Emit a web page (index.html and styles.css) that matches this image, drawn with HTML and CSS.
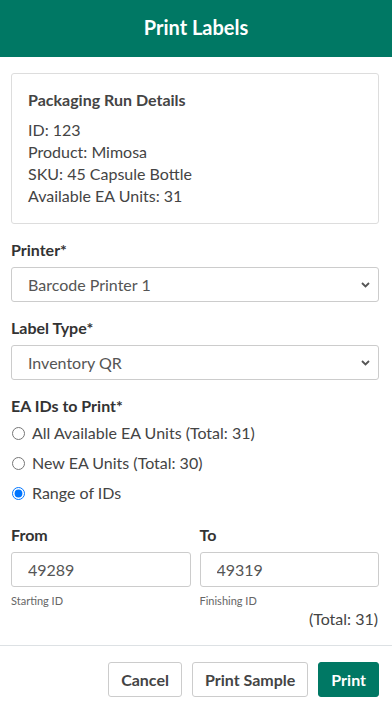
FILE: index.html
```html
<!DOCTYPE html>
<html lang="en">
  <head>
    <meta charset="UTF-8" />
    <meta name="viewport" content="width=device-width, initial-scale=1.0" />
    <title>Print Labels</title>
    <link rel="stylesheet" href="styles.css">
  </head>
  <body>
    <header class="cabecera">Print Labels</header>

    <main class="cuerpo">
      <!-- Detalles -->
      <div class="detalles">
        <h2>Packaging Run Details</h2>
        <p>ID: 123</p>
        <p>Product: Mimosa</p>
        <p>SKU: 45 Capsule Bottle</p>
        <p>Available EA Units: 31</p>
      </div>

      <label class="etiqueta" for="impresora">Printer*</label>
      <select id="impresora" class="campo selector">
        <option>Barcode Printer 1</option>
      </select>

      <label class="etiqueta" for="tipo">Label Type*</label>
      <select id="tipo" class="campo selector">
        <option>Inventory QR</option>
      </select>

      <div class="etiqueta">EA IDs to Print*</div>
      <div class="opciones">
        <label class="opcion"><input type="radio" name="ids" /> All Available EA Units (Total: 31)</label>
        <label class="opcion"><input type="radio" name="ids" /> New EA Units (Total: 30)</label>
        <label class="opcion"><input type="radio" name="ids" checked /> Range of IDs</label>
      </div>

      <div class="rango">
        <div class="grupo">
          <label class="etiqueta" for="desde">From</label>
          <input type="text" id="desde" class="campo" value="49289" />
          <small>Starting ID</small>
        </div>
        <div class="grupo">
          <label class="etiqueta" for="hasta">To</label>
          <input type="text" id="hasta" class="campo" value="49319" />
          <small>Finishing ID</small>
        </div>
      </div>
      <div class="total">(Total: 31)</div>
    </main>

    <footer class="pie">
      <button class="boton">Cancel</button>
      <button class="boton">Print Sample</button>
      <button class="boton principal">Print</button>
    </footer>
  </body>
</html>
```

FILE: styles.css
```css
* {
  box-sizing: border-box;
  margin: 0;
  padding: 0;
  font-family: 'Lato', 'Liberation Sans', sans-serif;
}

body {
  background: white;
  color: #444;
  font-size: 16px;
  line-height: 22px;
}

.cabecera {
  background-color: #007864;
  color: white;
  font-size: 20px;
  font-weight: bold;
  text-align: center;
  height: 57px;
  line-height: 55px;
}

.cuerpo {
  padding: 16px 13px 0 11px;
}

.detalles {
  border: 1px solid #ddd;
  border-radius: 3px;
  padding: 15px 16px 16px;
  margin-bottom: 15px;
}

.detalles h2 {
  font-size: 16px;
  font-weight: bold;
  margin-bottom: 8px;
}

.etiqueta {
  display: block;
  font-weight: bold;
  color: #333;
  margin-bottom: 6px;
}

.campo {
  display: block;
  width: 100%;
  height: 35px;
  border: 1px solid #ccc;
  border-radius: 3px;
  background-color: white;
  padding: 0 12px;
  font-size: 16px;
  color: #555;
  margin-bottom: 15px;
}

.selector {
  appearance: none;
  -webkit-appearance: none;
  padding: 0 30px 0 16px;
  background-image: url("data:image/svg+xml,%3Csvg xmlns='http://www.w3.org/2000/svg' width='9' height='6' viewBox='0 0 9 6'%3E%3Cpath d='M1 1l3.5 3.5L8 1' fill='none' stroke='%23555' stroke-width='1.8'/%3E%3C/svg%3E");
  background-repeat: no-repeat;
  background-position: right 8px center;
  background-size: 9px 6px;
}

input.campo {
  padding: 0 16px;
  margin-bottom: 6px;
}

.opciones {
  margin-top: -5px;
  margin-bottom: 16px;
}

.opcion {
  display: flex;
  align-items: center;
  gap: 7px;
  height: 30px;
  color: #444;
}

.opcion input {
  width: 13px;
  height: 13px;
  margin: 0 0 0 1px;
}

.rango {
  display: grid;
  grid-template-columns: 1fr 1fr;
  gap: 9px;
}

.grupo small {
  display: block;
  font-size: 11px;
  line-height: 16px;
  color: #666;
}

.total {
  text-align: right;
  line-height: 20px;
  padding-right: 1px;
}

.pie {
  margin-top: 16px;
  border-top: 1px solid #dde1e4;
  padding: 16px 13px 0 11px;
  display: flex;
  justify-content: flex-end;
  gap: 10px;
}

.boton {
  height: 35px;
  padding: 0 12px;
  border: 1px solid #ccc;
  border-radius: 3px;
  background: white;
  color: #444;
  font-size: 16px;
  font-weight: bold;
  cursor: pointer;
}

.boton.principal {
  background-color: #007864;
  border-color: #007864;
  color: white;
}
```
